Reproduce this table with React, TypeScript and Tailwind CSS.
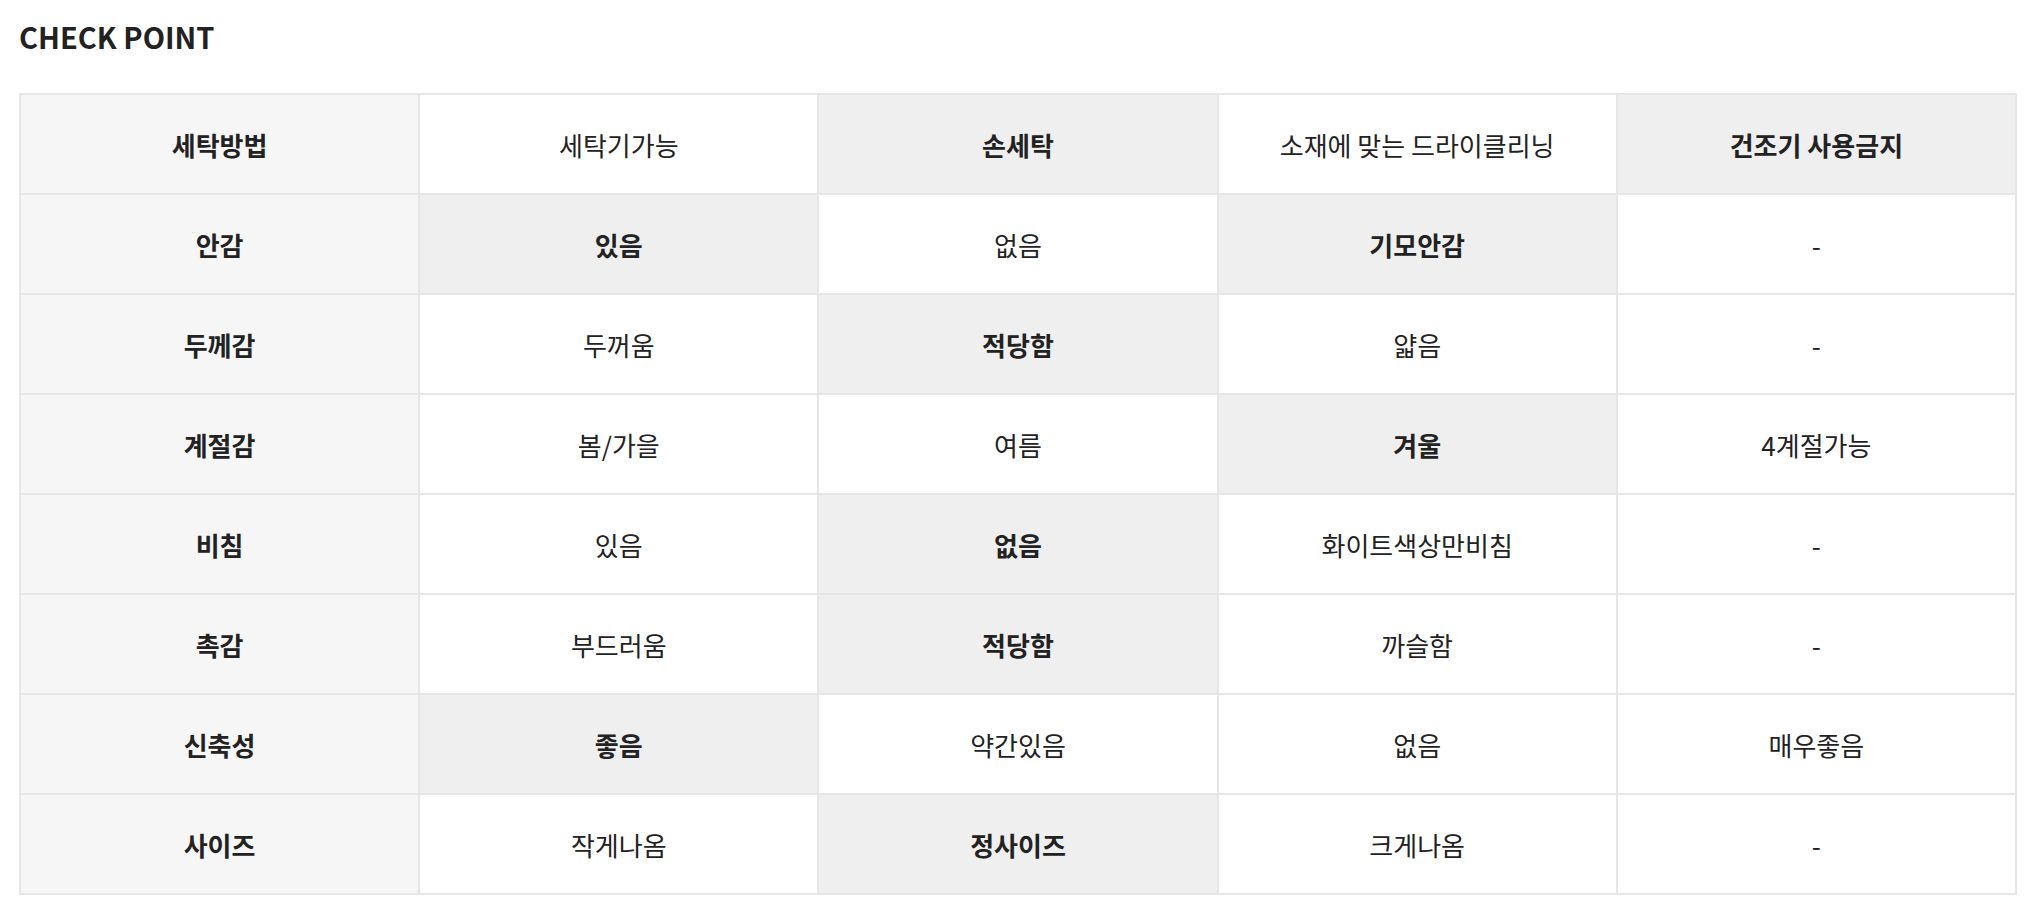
type Cell = { text: string; strong?: boolean };

const rows: { label: string; cells: Cell[] }[] = [
  {
    label: '세탁방법',
    cells: [
      { text: '세탁기가능' },
      { text: '손세탁', strong: true },
      { text: '소재에 맞는 드라이클리닝' },
      { text: '건조기 사용금지', strong: true },
    ],
  },
  {
    label: '안감',
    cells: [
      { text: '있음', strong: true },
      { text: '없음' },
      { text: '기모안감', strong: true },
      { text: '-' },
    ],
  },
  {
    label: '두께감',
    cells: [
      { text: '두꺼움' },
      { text: '적당함', strong: true },
      { text: '얇음' },
      { text: '-' },
    ],
  },
  {
    label: '계절감',
    cells: [
      { text: '봄/가을' },
      { text: '여름' },
      { text: '겨울', strong: true },
      { text: '4계절가능' },
    ],
  },
  {
    label: '비침',
    cells: [
      { text: '있음' },
      { text: '없음', strong: true },
      { text: '화이트색상만비침' },
      { text: '-' },
    ],
  },
  {
    label: '촉감',
    cells: [
      { text: '부드러움' },
      { text: '적당함', strong: true },
      { text: '까슬함' },
      { text: '-' },
    ],
  },
  {
    label: '신축성',
    cells: [
      { text: '좋음', strong: true },
      { text: '약간있음' },
      { text: '없음' },
      { text: '매우좋음' },
    ],
  },
  {
    label: '사이즈',
    cells: [
      { text: '작게나옴' },
      { text: '정사이즈', strong: true },
      { text: '크게나옴' },
      { text: '-' },
    ],
  },
];

export default function App() {
  return (
    <div
      className="min-h-screen bg-white px-[19px] pt-[14px] text-[#222]"
      style={{ fontFamily: '"Noto Sans CJK KR", "Noto Sans", sans-serif' }}
    >
      <h2 className="text-[29px] font-bold leading-[45px]">CHECK POINT</h2>

      <table className="mt-[34px] w-full table-fixed border-collapse border-2 border-[#e6e6e6] text-[26px]">
        <tbody>
          {rows.map((row) => (
            <tr key={row.label}>
              <td className="h-[100px] border-2 border-[#e6e6e6] bg-[#f6f6f6] text-center align-middle font-bold">
                {row.label}
              </td>
              {row.cells.map((c, i) => (
                <td
                  key={i}
                  className={
                    c.strong
                      ? 'h-[100px] border-2 border-[#e6e6e6] bg-[#efefef] text-center align-middle font-bold'
                      : 'h-[100px] border-2 border-[#e6e6e6] bg-white text-center align-middle'
                  }
                >
                  {c.text}
                </td>
              ))}
            </tr>
          ))}
        </tbody>
      </table>
    </div>
  );
}
